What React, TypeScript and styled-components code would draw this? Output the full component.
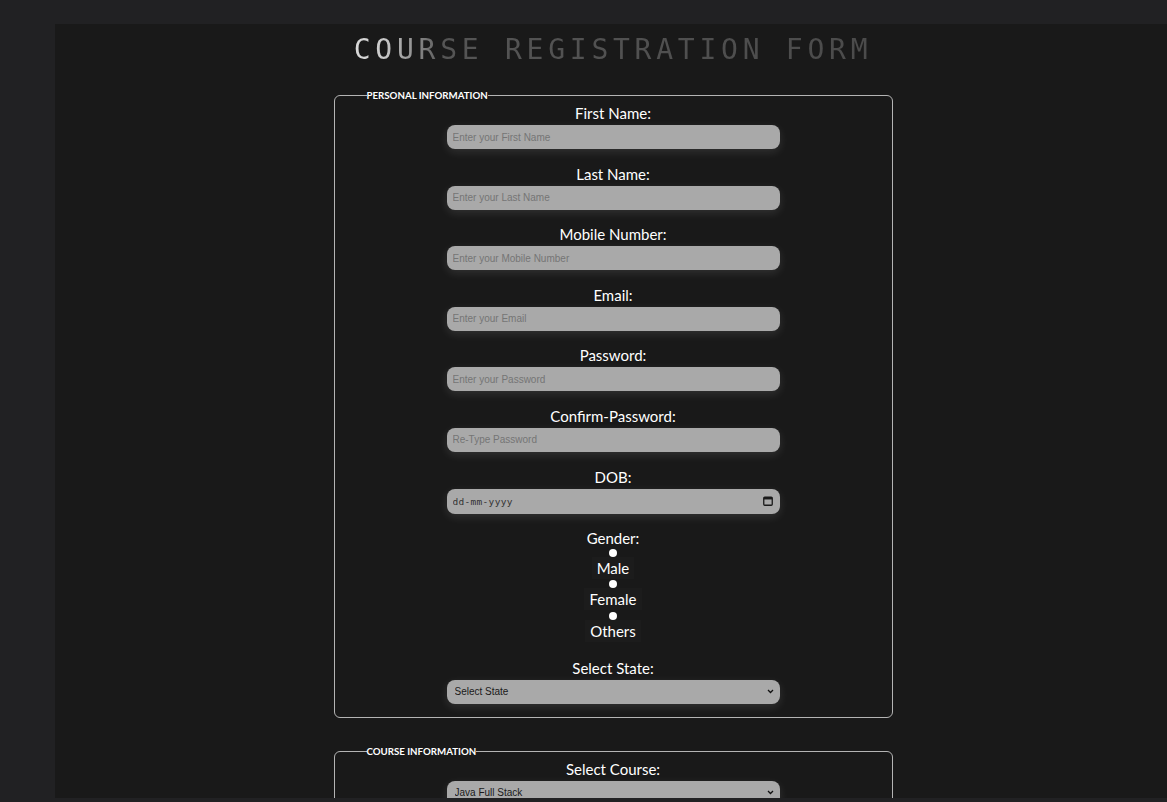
import React from "react";
import styled, { createGlobalStyle } from "styled-components";

const GlobalStyle = createGlobalStyle`
  html, body { margin: 0; padding: 0; }
  body {
    background: #212123;
    overflow: hidden;
    font-family: Lato, "Open Sans", sans-serif;
  }
`;

const Page = styled.div`
  padding: 24px 0 0 55px;
`;

const Container = styled.main`
  width: 1116px;
  height: 774px;
  background: #191919;
  overflow: hidden;
  display: flex;
  flex-direction: column;
  align-items: center;
  & > * { flex-shrink: 0; }
`;

const Title = styled.h1`
  margin: 0;
  padding-top: 9px;
  height: 66px;
  box-sizing: border-box;
  font-family: "DejaVu Sans Mono", "Liberation Mono", monospace;
  font-size: 28px;
  font-weight: 400;
  line-height: 34px;
  letter-spacing: 4.75px;
  background: linear-gradient(90deg, #dadada 0%, #c8c8c8 6%, #8c8c8c 12%, #555 17%, #4b4b4b 100%);
  -webkit-background-clip: text;
  background-clip: text;
  color: transparent;
`;

const Fieldset = styled.fieldset<{ $gap?: number }>`
  width: 559px;
  box-sizing: border-box;
  margin: ${(p) => p.$gap ?? 0}px 0 0;
  padding: 1px 12px 13px;
  border: 1px solid #b4b4b4;
  border-radius: 6px;
  display: flex;
  flex-direction: column;
  align-items: center;
  & > * { flex-shrink: 0; }
`;

const Legend = styled.legend`
  margin-left: 20px;
  padding: 0;
  color: #fff;
  font-family: Lato, sans-serif;
  font-size: 9.7px;
  font-weight: 700;
  line-height: 11px;
`;

const Field = styled.div<{ $after?: number }>`
  display: flex;
  flex-direction: column;
  align-items: center;
  margin-bottom: ${(p) => p.$after ?? 13.6}px;
  &:last-child { margin-bottom: 0; }
`;

const Label = styled.label<{ $tight?: boolean }>`
  display: block;
  color: #fff;
  font-size: 15px;
  line-height: 22px;
  margin-bottom: ${(p) => (p.$tight ? 0 : 1)}px;
`;

const chevron =
  "url(\"data:image/svg+xml,%3Csvg xmlns='http://www.w3.org/2000/svg' width='7' height='5' viewBox='0 0 7 5'%3E%3Cpath d='M1 1l2.5 2.5L6 1' fill='none' stroke='%23111' stroke-width='1.3'/%3E%3C/svg%3E\")";

const controlBase = `
  width: 333px;
  box-sizing: border-box;
  border: none;
  border-radius: 8px;
  background-color: #a9a9a9;
  box-shadow: 0 3px 10px rgba(255, 255, 255, 0.11);
  outline: none;
`;

const Input = styled.input`
  ${controlBase}
  height: 24px;
  padding: 0 6px;
  font-family: "Liberation Sans", Arial, sans-serif;
  font-size: 10px;
  color: #222;
  &::placeholder { color: #757575; }
`;

const DateBox = styled.div`
  ${controlBase}
  height: 25px;
  padding: 0 7px 0 6px;
  display: flex;
  align-items: center;
  justify-content: space-between;
`;

const DateInput = styled.input`
  flex: 1;
  border: none;
  background: transparent;
  outline: none;
  padding: 0;
  font-family: "DejaVu Sans Mono", monospace;
  font-size: 9.5px;
  letter-spacing: 0.3px;
  color: #333;
  &::placeholder { color: #333; }
`;

const Select = styled.select`
  ${controlBase}
  appearance: none;
  -webkit-appearance: none;
  height: 24px;
  padding: 0 20px 0 8px;
  background-image: ${chevron};
  background-repeat: no-repeat;
  background-position: right 6px center;
  font-family: "Liberation Sans", Arial, sans-serif;
  font-size: 10px;
  color: #1a1a1a;
`;

const RadioGroup = styled.div`
  display: flex;
  flex-direction: column;
  align-items: center;
`;

const Radio = styled.input`
  appearance: none;
  -webkit-appearance: none;
  width: 8px;
  height: 8px;
  margin: 1.3px 0 0;
  border-radius: 50%;
  background: #fff;
  &:first-child { margin-top: 0; }
`;

const RadioLabel = styled.label`
  display: block;
  color: #fff;
  font-size: 15px;
  line-height: 22px;
  padding: 0 5px;
  background: #1c1c1c;
`;

const CalendarIcon = () => (
  <svg width="10" height="10" viewBox="0 0 10 10" aria-hidden="true">
    <rect x="0.75" y="1.25" width="8.5" height="8" rx="1" fill="none" stroke="#1a1a1a" strokeWidth="1.3" />
    <rect x="0.75" y="1.25" width="8.5" height="2.2" fill="#1a1a1a" />
  </svg>
);

const textFields = [
  { id: "fname", label: "First Name:", ph: "Enter your First Name", type: "text" },
  { id: "lname", label: "Last Name:", ph: "Enter your Last Name", type: "text" },
  { id: "mobile", label: "Mobile Number:", ph: "Enter your Mobile Number", type: "tel" },
  { id: "email", label: "Email:", ph: "Enter your Email", type: "email" },
  { id: "pass", label: "Password:", ph: "Enter your Password", type: "password" },
  { id: "cpass", label: "Confirm-Password:", ph: "Re-Type Password", type: "password" },
];

export default function App() {
  return (
    <>
      <GlobalStyle />
      <Page>
        <Container>
          <Title>COURSE REGISTRATION FORM</Title>
          <Fieldset>
            <Legend>PERSONAL INFORMATION</Legend>
            {textFields.map((f) => (
              <Field key={f.id}>
                <Label htmlFor={f.id}>{f.label}</Label>
                <Input id={f.id} type={f.type} placeholder={f.ph} />
              </Field>
            ))}
            <Field>
              <Label htmlFor="dob">DOB:</Label>
              <DateBox>
                <DateInput id="dob" type="text" placeholder="dd-mm-yyyy" readOnly />
                <CalendarIcon />
              </DateBox>
            </Field>
            <Field $after={15}>
              <Label $tight>Gender:</Label>
              <RadioGroup>
                <Radio type="radio" name="gender" id="male" />
                <RadioLabel htmlFor="male">Male</RadioLabel>
                <Radio type="radio" name="gender" id="female" />
                <RadioLabel htmlFor="female">Female</RadioLabel>
                <Radio type="radio" name="gender" id="others" />
                <RadioLabel htmlFor="others">Others</RadioLabel>
              </RadioGroup>
            </Field>
            <Field>
              <Label htmlFor="state">Select State:</Label>
              <Select id="state" defaultValue="">
                <option value="">Select State</option>
                <option value="ka">Karnataka</option>
                <option value="mh">Maharashtra</option>
                <option value="tn">Tamil Nadu</option>
              </Select>
            </Field>
          </Fieldset>
          <Fieldset $gap={28}>
            <Legend>COURSE INFORMATION</Legend>
            <Field>
              <Label htmlFor="course">Select Course:</Label>
              <Select id="course" defaultValue="java">
                <option value="java">Java Full Stack</option>
                <option value="python">Python Full Stack</option>
                <option value="mern">MERN Stack</option>
              </Select>
            </Field>
          </Fieldset>
        </Container>
      </Page>
    </>
  );
}
